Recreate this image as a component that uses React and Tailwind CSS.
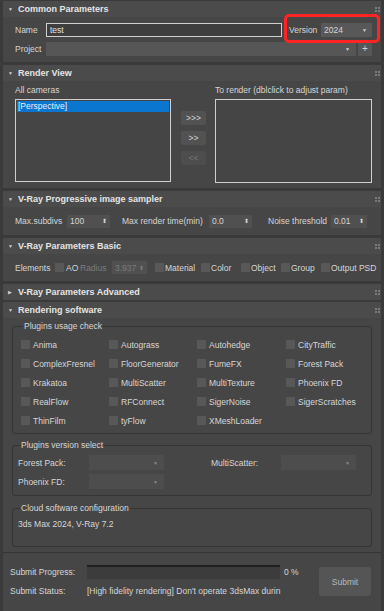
import React from "react";

const Grip = () => (
  <svg width="5" height="5" viewBox="0 0 5 5" className="ml-auto">
    <rect x="0" y="0" width="2" height="2" fill="#7a7a7a" />
    <rect x="3" y="0" width="2" height="2" fill="#7a7a7a" />
    <rect x="0" y="3" width="2" height="2" fill="#7a7a7a" />
    <rect x="3" y="3" width="2" height="2" fill="#7a7a7a" />
  </svg>
);

const Header = ({ title, open = true }) => (
  <div className="flex h-[16px] items-center bg-[#4b4b4b] pl-[5px] pr-[1px]">
    <span className="w-[10px] text-[5px] leading-none text-[#cfcfcf]">{open ? "▼" : "▶"}</span>
    <span className="text-[9px] font-bold leading-none text-[#e4e4e4]">{title}</span>
    <Grip />
  </div>
);

const Check = () => <span className="inline-block h-[9px] w-[9px] shrink-0 bg-[#585858]" />;

const Spinner = ({ value, w, dim }) => (
  <div
    className={`flex h-[13px] items-center justify-between bg-[#505050] pl-[3px] pr-[3px] ${w} ${
      dim ? "text-[#7c7c7c]" : "text-[#d6d6d6]"
    }`}
  >
    <span>{value}</span>
    <span className="text-[6px] leading-none">⬍</span>
  </div>
);

const Dropdown = ({ w }) => (
  <div className={`flex h-[15px] items-center justify-end bg-[#4d4d4d] pr-[6px] ${w}`}>
    <span className="text-[5px] text-[#8a8a8a]">▼</span>
  </div>
);

const plugins = [
  "Anima",
  "Autograss",
  "Autohedge",
  "CityTraffic",
  "ComplexFresnel",
  "FloorGenerator",
  "FumeFX",
  "Forest Pack",
  "Krakatoa",
  "MultiScatter",
  "MultiTexture",
  "Phoenix FD",
  "RealFlow",
  "RFConnect",
  "SigerNoise",
  "SigerScratches",
  "ThinFilm",
  "tyFlow",
  "XMeshLoader",
];

const Group = ({ label, className, children }) => (
  <fieldset className={`mx-[9px] rounded-[3px] border border-[#353535] ${className}`}>
    <legend className="ml-[2px] px-[1px] text-[8.5px] leading-[10px] text-[#d6d6d6]">{label}</legend>
    {children}
  </fieldset>
);

export default function App() {
  return (
    <div className="relative flex h-[611px] w-[384px] flex-col overflow-hidden bg-[#3a3a3a] px-[3px] pt-[1px] font-['Liberation_Sans',Arial,sans-serif] text-[8.5px] leading-[10px] text-[#d6d6d6]">
      {/* Common Parameters */}
      <Header title="Common Parameters" />
      <div className="h-[45px] bg-[#464646] pl-[12px] pt-[6px]">
        <div className="flex h-[14px] items-center">
          <span className="w-[31px]">Name</span>
          <div className="flex h-[14px] w-[236px] items-center border border-[#cfcfcf] bg-[#3e3e3e] pl-[3px] text-[#e0e0e0]">
            test
          </div>
          <span className="ml-[7px] w-[32px]">Version</span>
          <div className="flex h-[14px] w-[51px] items-center justify-between bg-[#585858] pl-[3px] pr-[5px]">
            <span>2024</span>
            <span className="text-[5px] text-[#d0d0d0]">▼</span>
          </div>
        </div>
        <div className="mt-[5px] flex h-[14px] items-center">
          <span className="w-[31px]">Project</span>
          <div className="flex h-[14px] w-[310px] items-center justify-end bg-[#565656] pr-[6px]">
            <span className="text-[5px] text-[#d0d0d0]">▼</span>
          </div>
          <div className="ml-[2px] flex h-[13px] w-[14px] items-center justify-center bg-[#565656] text-[10px] text-[#d0d0d0]">
            +
          </div>
        </div>
      </div>

      {/* Render View */}
      <div className="mt-[3px]">
        <Header title="Render View" />
      </div>
      <div className="flex h-[107px] bg-[#464646] pl-[12px] pt-[4px]">
        <div className="w-[156px]">
          <div className="h-[10px]">All cameras</div>
          <div className="mt-[4px] h-[83px] border border-[#cfcfcf] bg-[#454545] p-[1px]">
            <div className="h-[11px] bg-[#0b76cf] pl-[1px] leading-[11px] text-[#e8eef5]">[Perspective]</div>
          </div>
        </div>
        <div className="ml-[10px] mt-[26px] flex w-[25px] flex-col gap-[6px]">
          <div className="flex h-[14px] items-center justify-center rounded-[2px] bg-[#525252]">&gt;&gt;&gt;</div>
          <div className="flex h-[14px] items-center justify-center rounded-[2px] bg-[#525252]">&gt;&gt;</div>
          <div className="flex h-[14px] items-center justify-center rounded-[2px] bg-[#4d4d4d] text-[#777]">&lt;&lt;</div>
        </div>
        <div className="ml-[9px] w-[157px]">
          <div className="h-[10px]">To render (dblclick to adjust param)</div>
          <div className="mt-[4px] h-[84px] border border-[#cfcfcf] bg-[#454545]" />
        </div>
      </div>

      {/* V-Ray Progressive image sampler */}
      <div className="mt-[3px]">
        <Header title="V-Ray Progressive image sampler" />
      </div>
      <div className="flex h-[28px] items-center bg-[#464646] pl-[12px]">
        <span className="w-[52px]">Max.subdivs</span>
        <Spinner value="100" w="w-[43px]" />
        <span className="ml-[12px] w-[87px]">Max render time(min)</span>
        <Spinner value="0.0" w="w-[43px]" />
        <span className="ml-[16px] w-[63px]">Noise threshold</span>
        <Spinner value="0.01" w="w-[36px]" />
      </div>

      {/* V-Ray Parameters Basic */}
      <div className="mt-[3px]">
        <Header title="V-Ray Parameters Basic" />
      </div>
      <div className="flex h-[27px] items-center bg-[#464646] pl-[12px]">
        <span className="w-[40px]">Elements</span>
        <Check />
        <span className="ml-[2px] w-[14px]">AO</span>
        <span className="w-[32px] text-[#7c7c7c]">Radius</span>
        <Spinner value="3.937" w="w-[35px]" dim />
        <div className="ml-[8px] flex w-[46px] items-center gap-[1px]">
          <Check />
          <span>Material</span>
        </div>
        <div className="flex w-[40px] items-center gap-[1px]">
          <Check />
          <span>Color</span>
        </div>
        <div className="flex w-[40px] items-center gap-[1px]">
          <Check />
          <span>Object</span>
        </div>
        <div className="flex w-[40px] items-center gap-[1px]">
          <Check />
          <span>Group</span>
        </div>
        <div className="flex items-center gap-[1px]">
          <Check />
          <span>Output PSD</span>
        </div>
      </div>

      {/* V-Ray Parameters Advanced */}
      <div className="mt-[3px]">
        <Header title="V-Ray Parameters Advanced" open={false} />
      </div>

      {/* Rendering software */}
      <div className="mt-[2px]">
        <Header title="Rendering software" />
      </div>
      <div className="h-[235px] border-b border-[#353535] bg-[#464646] pt-[3px]">
        <Group label="Plugins usage check" className="pb-[3px] pl-[8px] pt-[4px]">
          <div className="grid grid-cols-[88px_88px_89px_80px]">
            {plugins.map((p) => (
              <div key={p} className="flex h-[19px] items-center gap-[2px]">
                <Check />
                <span className="ml-[1px]">{p}</span>
              </div>
            ))}
          </div>
        </Group>

        <Group label="Plugins version select" className="mt-[6px] pb-[6px] pl-[5px] pt-[5px]">
          <div className="flex items-center">
            <span className="w-[71px]">Forest Pack:</span>
            <Dropdown w="w-[75px]" />
            <span className="ml-[47px] w-[70px]">MultiScatter:</span>
            <Dropdown w="w-[75px]" />
          </div>
          <div className="mt-[4px] flex items-center">
            <span className="w-[71px]">Phoenix FD:</span>
            <Dropdown w="w-[75px]" />
          </div>
        </Group>

        <Group label="Cloud software configuration" className="mt-[7px] pb-[17px] pl-[5px] pt-[6px]">
          <div>3ds Max 2024, V-Ray 7.2</div>
        </Group>
      </div>

      {/* Submit area */}
      <div className="flex flex-1 bg-[#464646] pl-[7px] pt-[12px]">
        <div className="w-[309px]">
          <div className="flex h-[14px] items-center">
            <span className="w-[77px]">Submit Progress:</span>
            <div className="h-[14px] w-[193px] border-t-2 border-[#202020] bg-[#3c3c3c]" />
            <span className="ml-[4px]">0 %</span>
          </div>
          <div className="mt-[7px] flex h-[10px] items-center">
            <span className="w-[77px]">Submit Status:</span>
            <span className="whitespace-nowrap">[High fidelity rendering] Don't operate 3dsMax durin</span>
          </div>
        </div>
        <div className="mt-[2px] flex h-[29px] w-[52px] items-center justify-center rounded-[3px] bg-[#555555] text-[#b8b8b8]">
          Submit
        </div>
      </div>

      {/* highlight annotation */}
      <div className="pointer-events-none absolute left-[284px] top-[14px] h-[29px] w-[96px] rounded-[5px] border-[3px] border-[#ff2424]" />
    </div>
  );
}
